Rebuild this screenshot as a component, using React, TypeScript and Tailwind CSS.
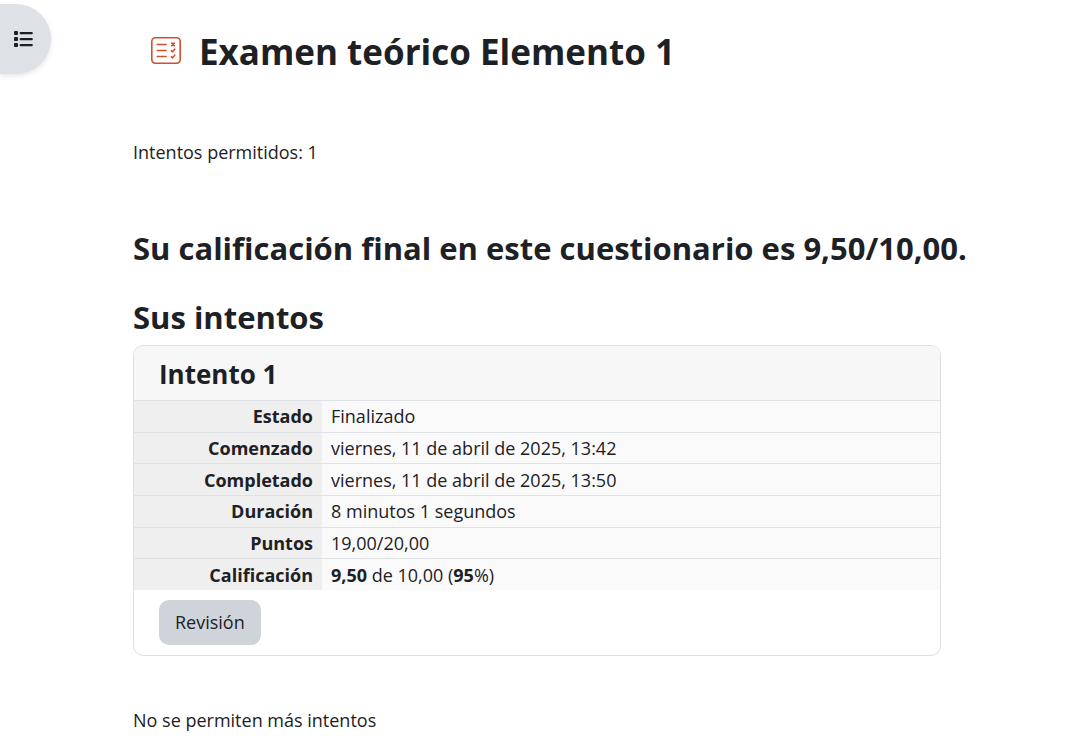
import type { ReactNode } from "react";

const rows: { label: string; value: ReactNode }[] = [
  { label: "Estado", value: "Finalizado" },
  { label: "Comenzado", value: "viernes, 11 de abril de 2025, 13:42" },
  { label: "Completado", value: "viernes, 11 de abril de 2025, 13:50" },
  { label: "Duración", value: "8 minutos 1 segundos" },
  { label: "Puntos", value: "19,00/20,00" },
  {
    label: "Calificación",
    value: (
      <>
        <b>9,50</b> de 10,00 (<b>95</b>%)
      </>
    ),
  },
];

function ListIcon() {
  return (
    <svg viewBox="0 0 20 16" className="h-4 w-5" fill="#1d2125" aria-hidden="true">
      <rect x="0" y="0" width="4" height="4" rx="0.8" />
      <rect x="0" y="6" width="4" height="4" rx="0.8" />
      <rect x="0" y="12" width="4" height="4" rx="0.8" />
      <rect x="5.6" y="0.9" width="13.2" height="2.3" rx="1" />
      <rect x="5.6" y="6.9" width="13.2" height="2.3" rx="1" />
      <rect x="5.6" y="12.9" width="13.2" height="2.3" rx="1" />
    </svg>
  );
}

function QuizIcon() {
  return (
    <svg
      viewBox="0 0 30 27"
      className="mb-1 h-[27px] w-[30px] shrink-0"
      fill="none"
      stroke="#d14f2c"
      strokeWidth="1.6"
      strokeLinecap="round"
      strokeLinejoin="round"
      aria-hidden="true"
    >
      <rect x="0.8" y="0.8" width="28.4" height="25.4" rx="3.6" />
      <path d="M6.3 7.5h8.8M6.3 13.5h8.8M6.3 19.5h8.8" />
      <path d="M20.8 6.1l2.4 2.6M23.2 6.1l-2.4 2.6" strokeWidth="1.8" />
      <path d="M20.4 13.8l1.1 1 2.2-2.6M20.4 19.8l1.1 1 2.2-2.6" />
    </svg>
  );
}

export default function App() {
  return (
    <div className="flex items-start bg-white pt-1 font-['Open_Sans','Noto_Sans',sans-serif] text-lg leading-7 text-[#1d2125]">
      <aside className="w-[51px] shrink-0">
        <button
          type="button"
          aria-label="Abrir índice del curso"
          className="flex h-[70px] w-full items-center rounded-r-full bg-[#dee2e6] pl-3.5 shadow-[0_2px_5px_rgba(0,0,0,0.1)]"
        >
          <ListIcon />
        </button>
      </aside>

      <main className="min-w-0 flex-1 pr-[60px] pl-[82px]">
        <header className="flex items-center gap-[18px] pt-6 pl-[18px]">
          <QuizIcon />
          <h1 className="text-[35px] leading-[48px] font-bold">Examen teórico Elemento 1</h1>
        </header>

        <p className="mt-[62px]">Intentos permitidos: 1</p>

        <h2 className="mt-[62px] text-[31px] leading-10 font-bold">
          Su calificación final en este cuestionario es 9,50/10,00.
        </h2>

        <h2 className="mt-[29px] text-[31px] leading-10 font-bold">Sus intentos</h2>

        <section className="mt-2 mr-[72px] overflow-hidden rounded-[10px] border border-[#dfdfdf]">
          <h3 className="border-b border-[#dee2e6] bg-[#f7f7f7] px-[25px] pt-2.5 pb-2 text-[26px] leading-9 font-bold">
            Intento 1
          </h3>
          <table className="h-[189px] w-full border-collapse">
            <tbody className="divide-y divide-[#dee2e6]">
              {rows.map((row) => (
                <tr key={row.label}>
                  <th scope="row" className="w-[188px] bg-[#efefef] px-[9px] text-right font-bold">
                    {row.label}
                  </th>
                  <td className="bg-[#fafafa] px-[9px]">{row.value}</td>
                </tr>
              ))}
            </tbody>
          </table>
          <div className="px-[25px] py-2.5">
            <a
              href="#revision"
              className="inline-block rounded-[10px] bg-[#ced4da] px-4 py-2 align-top leading-[29px]"
            >
              Revisión
            </a>
          </div>
        </section>

        <p className="mt-[50px] pb-4">No se permiten más intentos</p>
      </main>
    </div>
  );
}
